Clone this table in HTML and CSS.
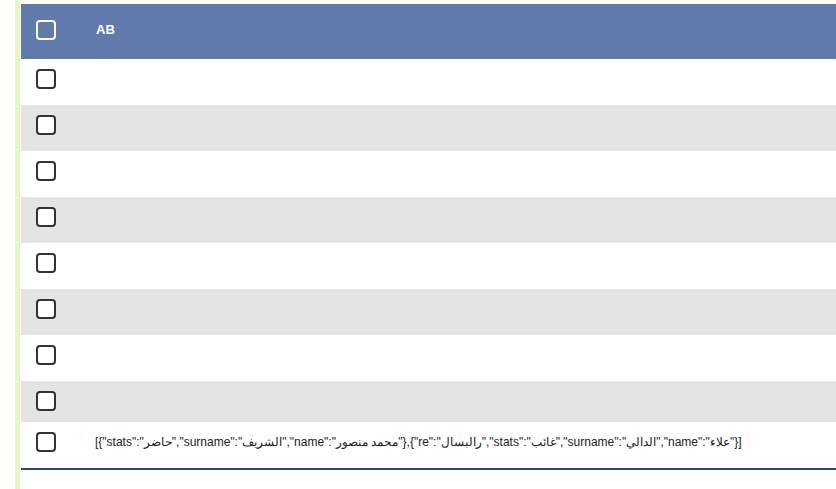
FILE: index.html
```html
<!DOCTYPE html>
<html lang="en">
<head>
<meta charset="utf-8">
<title>Table</title>
<link rel="stylesheet" href="styles.css">
</head>
<body>
<div class="page">
  <div class="grid">
    <div class="row head">
      <div class="cell-check"><span class="box box-light"></span></div>
      <div class="cell-text">AB</div>
    </div>
    <div class="row"><div class="cell-check"><span class="box"></span></div><div class="cell-text"></div></div>
    <div class="row alt"><div class="cell-check"><span class="box"></span></div><div class="cell-text"></div></div>
    <div class="row"><div class="cell-check"><span class="box"></span></div><div class="cell-text"></div></div>
    <div class="row alt"><div class="cell-check"><span class="box"></span></div><div class="cell-text"></div></div>
    <div class="row"><div class="cell-check"><span class="box"></span></div><div class="cell-text"></div></div>
    <div class="row alt"><div class="cell-check"><span class="box"></span></div><div class="cell-text"></div></div>
    <div class="row"><div class="cell-check"><span class="box"></span></div><div class="cell-text"></div></div>
    <div class="row alt short"><div class="cell-check"><span class="box"></span></div><div class="cell-text"></div></div>
    <div class="row last"><div class="cell-check"><span class="box"></span></div><div class="cell-text">[{"stats":"حاضر","surname":"الشريف","name":"محمد منصور"},{"re":"رالبسال","stats":"غائب","surname":"الدالي","name":"علاء"}]</div></div>
  </div>
</div>
</body>
</html>
```
FILE: styles.css
```css
html, body {
  margin: 0;
  padding: 0;
  background: #ffffff;
}
body {
  font-family: "Liberation Sans", Arial, "Noto Sans", sans-serif;
  font-size: 12px;
  color: #222222;
  overflow: hidden;
}
.page {
  margin-left: 15px;
  border-left: 5px solid #e5f7c2;
  padding-left: 1px;
  padding-top: 4px;
  min-height: 100vh;
  box-sizing: border-box;
}
.grid {
  display: flex;
  flex-direction: column;
}
.row {
  display: flex;
  align-items: flex-start;
  height: 46px;
  padding-top: 10px;
  box-sizing: border-box;
  background: #ffffff;
}
.row.alt {
  background: #e4e4e4;
}
.row.short {
  height: 41px;
}
.row.head {
  height: 55px;
  padding-top: 16px;
  background: #617aad;
  color: #ffffff;
  font-weight: bold;
  font-size: 13px;
}
.row.last {
  height: 48px;
  border-bottom: 2px solid #2d4676;
}
.cell-check {
  width: 74px;
  padding-left: 15px;
  box-sizing: border-box;
  flex: none;
}
.head .cell-text {
  padding-left: 1px;
}
.cell-text {
  line-height: 20px;
  white-space: nowrap;
}
.box {
  display: block;
  width: 20px;
  height: 20px;
  box-sizing: border-box;
  border: 2px solid #333333;
  border-radius: 4px;
  background: #ffffff;
}
.box-light {
  border-color: #ffffff;
  background: transparent;
}
```
